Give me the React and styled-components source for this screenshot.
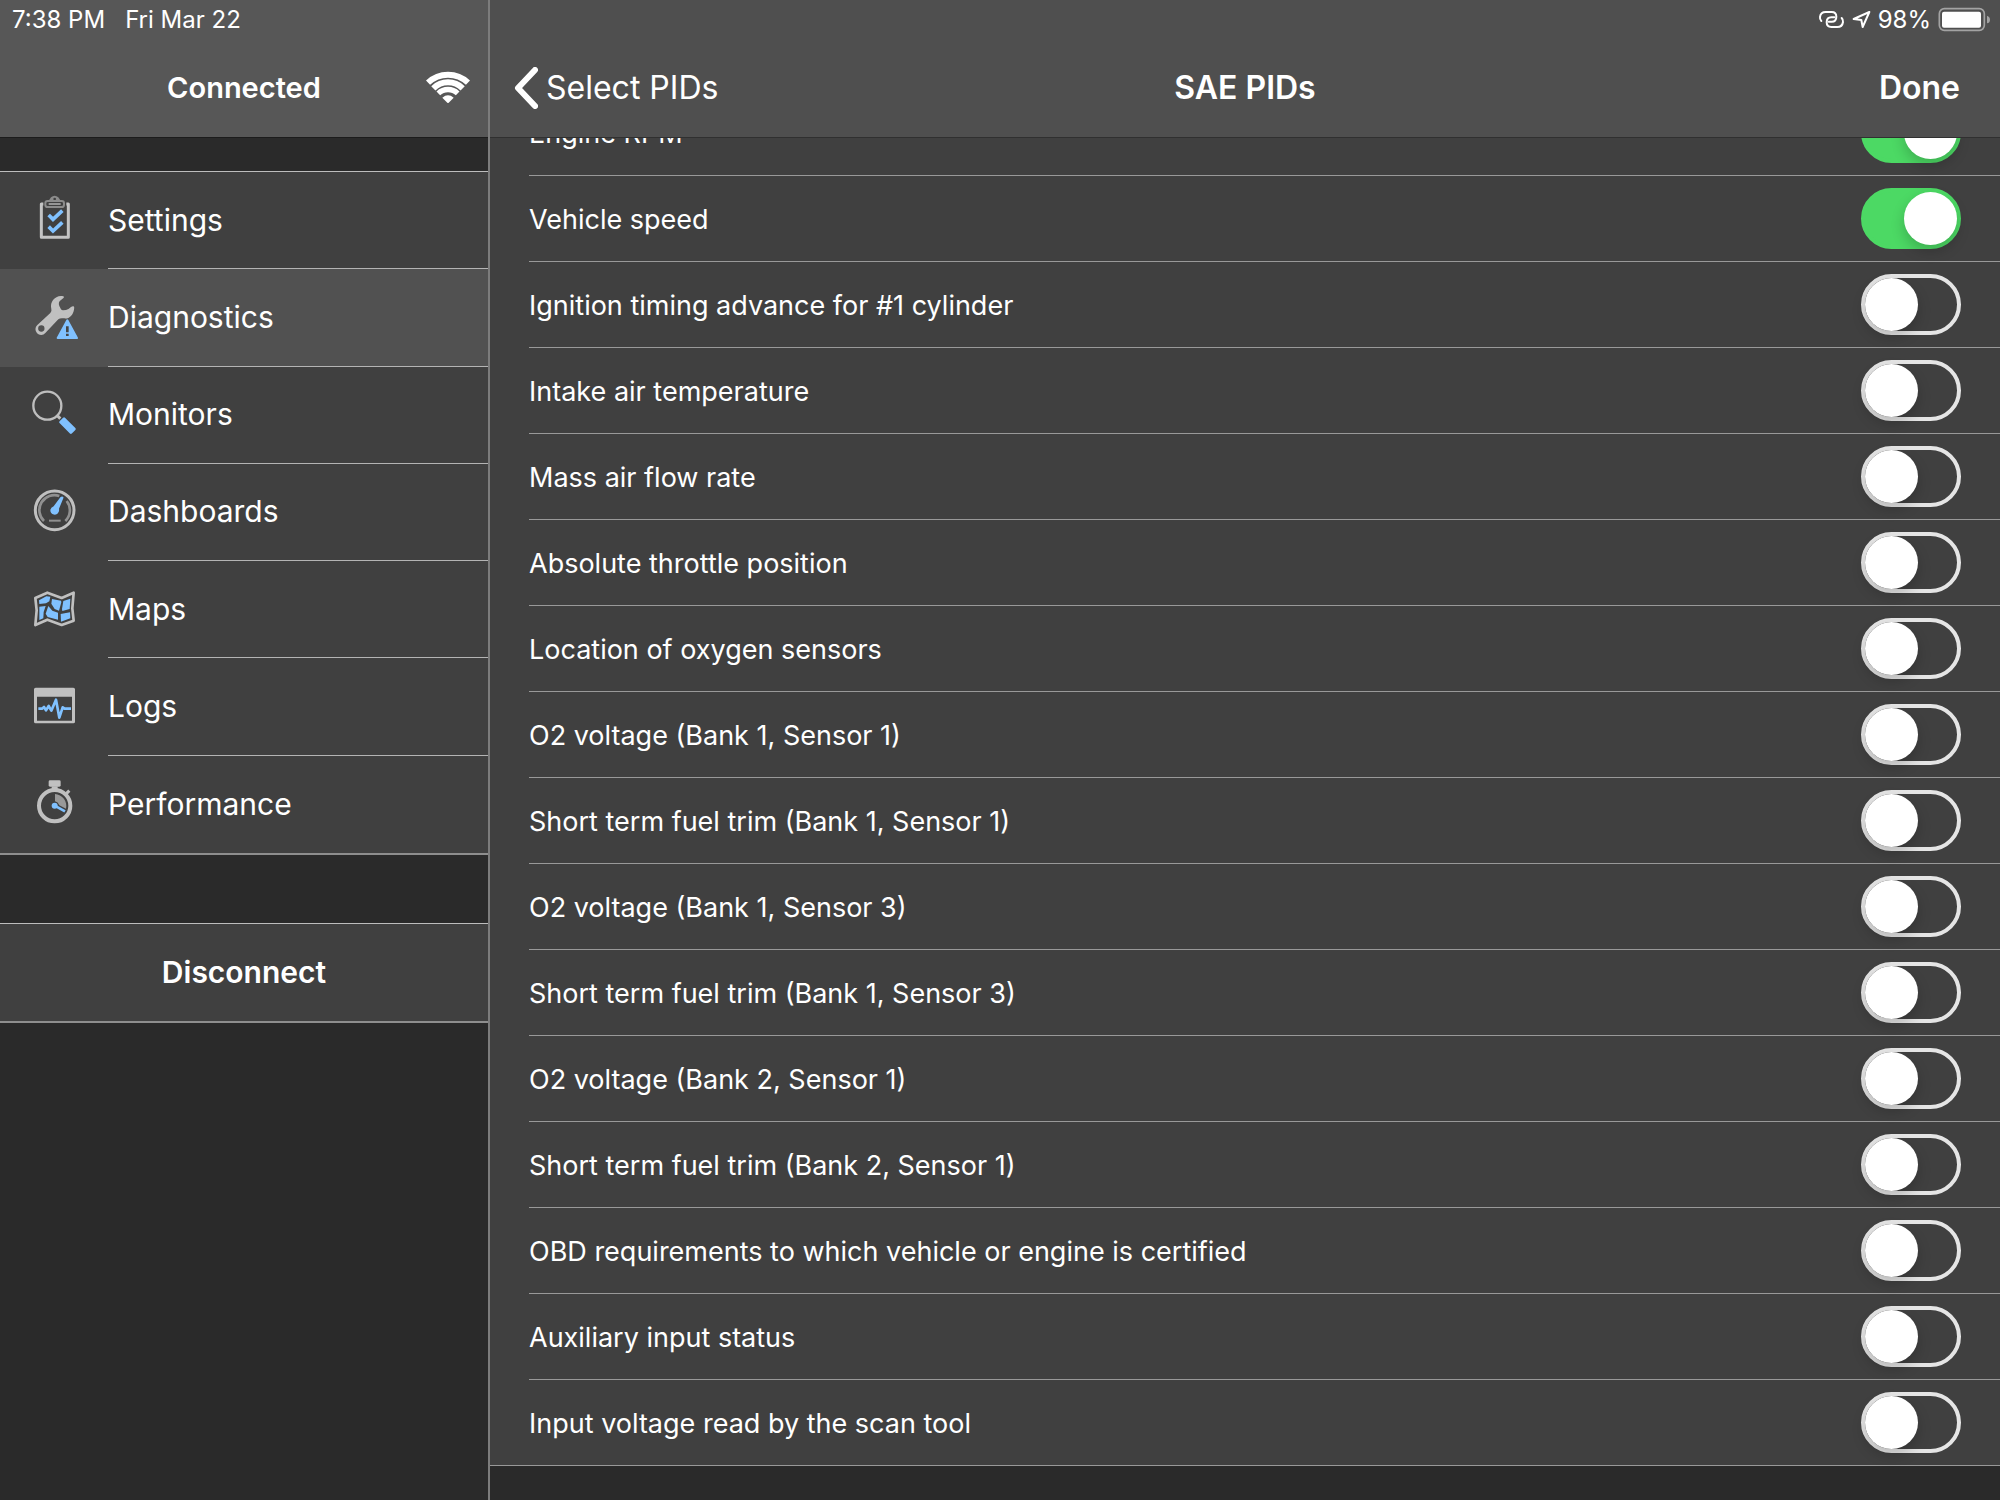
import React, { useState } from 'react';
import styled, { createGlobalStyle, css } from 'styled-components';

const menuItems = [
    { name: 'Settings', Icon: SettingsIcon },
    { name: 'Diagnostics', Icon: DiagnosticsIcon },
    { name: 'Monitors', Icon: MonitorsIcon },
    { name: 'Dashboards', Icon: DashboardsIcon },
    { name: 'Maps', Icon: MapsIcon },
    { name: 'Logs', Icon: LogsIcon },
    { name: 'Performance', Icon: PerformanceIcon },
];

const initialPids = [
    { name: 'Engine RPM', on: true },
    { name: 'Vehicle speed', on: true },
    { name: 'Ignition timing advance for #1 cylinder', on: false },
    { name: 'Intake air temperature', on: false },
    { name: 'Mass air flow rate', on: false },
    { name: 'Absolute throttle position', on: false },
    { name: 'Location of oxygen sensors', on: false },
    { name: 'O2 voltage (Bank 1, Sensor 1)', on: false },
    { name: 'Short term fuel trim (Bank 1, Sensor 1)', on: false },
    { name: 'O2 voltage (Bank 1, Sensor 3)', on: false },
    { name: 'Short term fuel trim (Bank 1, Sensor 3)', on: false },
    { name: 'O2 voltage (Bank 2, Sensor 1)', on: false },
    { name: 'Short term fuel trim (Bank 2, Sensor 1)', on: false },
    { name: 'OBD requirements to which vehicle or engine is certified', on: false },
    { name: 'Auxiliary input status', on: false },
    { name: 'Input voltage read by the scan tool', on: false },
];

function App() {
    const [selected, setSelected] = useState('Diagnostics');
    const [pids, setPids] = useState(initialPids);

    const togglePid = (index) => {
        setPids(pids.map((pid, i) => (i === index ? { ...pid, on: !pid.on } : pid)));
    };

    return (
        <Page>
            <GlobalStyle />
            <Sidebar>
                <SideHeader>
                    <StatusBar>
                        <span>7:38 PM</span>
                        <span>Fri Mar 22</span>
                    </StatusBar>
                    <NavBar>
                        <span />
                        <SideTitle>Connected</SideTitle>
                        <WifiIcon />
                    </NavBar>
                </SideHeader>
                <Menu>
                    {menuItems.map(({ name, Icon }) => (
                        <MenuItem key={name}>
                            <MenuButton
                                type="button"
                                $active={selected === name}
                                onClick={() => setSelected(name)}
                            >
                                <Icon />
                                <MenuLabel>{name}</MenuLabel>
                            </MenuButton>
                        </MenuItem>
                    ))}
                </Menu>
                <DisconnectButton type="button">Disconnect</DisconnectButton>
            </Sidebar>

            <Main>
                <MainHeader>
                    <StatusBar $right>
                        <HotspotIcon />
                        <LocationIcon />
                        <span>98%</span>
                        <BatteryIcon />
                    </StatusBar>
                    <NavBar>
                        <BackButton type="button">
                            <ChevronIcon />
                            Select PIDs
                        </BackButton>
                        <MainTitle>SAE PIDs</MainTitle>
                        <DoneButton type="button">Done</DoneButton>
                    </NavBar>
                </MainHeader>
                <ScrollArea>
                    <PidList>
                        {pids.map((pid, index) => (
                            <PidRow key={pid.name}>
                                <PidLabel htmlFor={'pid' + index}>{pid.name}</PidLabel>
                                <Switch
                                    id={'pid' + index}
                                    type="checkbox"
                                    role="switch"
                                    checked={pid.on}
                                    onChange={() => togglePid(index)}
                                />
                            </PidRow>
                        ))}
                    </PidList>
                </ScrollArea>
            </Main>
        </Page>
    );
}

/* menu icons */

function SettingsIcon() {
    return (
        <MenuSvg viewBox="96 51 144 144">
            <path d="M130 72H124V172H205V72H199" fill="none" stroke="#c4c4c4" strokeWidth="9" strokeLinejoin="round" />
            <path d="M146 62L153 52Q164 42 175 52L182 62Z" fill="#8c8c8c" />
            <circle cx="164" cy="57" r="4" fill="#404040" />
            <rect x="136" y="63" width="56" height="18" rx="7" fill="#404040" stroke="#8c8c8c" strokeWidth="6" />
            <path d="M146 72H182" stroke="#a8a8a8" strokeWidth="5" />
            <path d="M146 105L159 118L187 92M146 140L159 153L187 127" fill="none" stroke="#80c1ff" strokeWidth="11" />
        </MenuSvg>
    );
}

function DiagnosticsIcon() {
    return (
        <MenuSvg viewBox="96 342 144 144">
            <path
                d="M112 435L151 399Q156 394 154 387C149 366 163 349 183 348Q192 347 192 352Q191 355 184 359C176 364 175 370 178 378L183 388Q185 391 189 391L198 390Q206 388 212 382Q218 377 221 379Q224 382 222 389C219 406 207 418 191 415Q181 413 175 418L136 459A17 17 0 1 1 112 435ZM124 436A9 9 0 1 0 124 455A9 9 0 1 0 124 436Z"
                fill="#c0c0c0"
                fillRule="evenodd"
            />
            <path d="M202 421L231 474H173Z" fill="#80c1ff" stroke="#80c1ff" strokeWidth="6" strokeLinejoin="round" />
            <path d="M202 439V457M202 461V468" stroke="#454545" strokeWidth="8" />
        </MenuSvg>
    );
}

function MonitorsIcon() {
    return (
        <MenuSvg viewBox="96 93 144 144">
            <circle cx="142" cy="137" r="42" fill="none" stroke="#bebebe" strokeWidth="7" />
            <path d="M171 166L181 176" stroke="#bebebe" strokeWidth="9" />
            <rect x="176" y="185" width="52" height="23" rx="4" transform="rotate(45 202 197)" fill="#80c1ff" />
        </MenuSvg>
    );
}

function DashboardsIcon() {
    return (
        <MenuSvg viewBox="96 385 144 144">
            <circle cx="164" cy="452" r="58" fill="none" stroke="#c0c0c0" strokeWidth="9" />
            <path d="M132 484A45 45 0 0 1 178 409M200 424A45 45 0 0 1 196 484" fill="none" stroke="#909090" strokeWidth="8" />
            <path d="M147 483H182" stroke="#909090" strokeWidth="6" />
            <path d="M151 452Q152 443 161 440L181 413Q186 408 190 412Q191 414 189 418L177 447Q178 453 176 457A13 13 0 0 1 151 452Z" fill="#80c1ff" />
        </MenuSvg>
    );
}

function MapsIcon() {
    return (
        <MenuSvg viewBox="96 77 144 144">
            <path
                d="M106 113L142 97L185 113L221 97L217 144L221 181L185 194L142 178L106 194L110 150Z"
                fill="none"
                stroke="#c0c0c0"
                strokeWidth="8"
                strokeLinejoin="round"
            />
            <path
                d="M117 120L139 108L151 109L148 123L138 129L118 131ZM156 116L183 121L184 126L177 151L164 146L154 130ZM190 122L211 115L209 146L187 152L186 146ZM182 161L210 156L211 174L183 184ZM145 137L157 151L174 157L174 178L143 170L137 160ZM118 139L137 137L131 155L130 174L118 179Z"
                fill="#80c1ff"
            />
        </MenuSvg>
    );
}

function LogsIcon() {
    return (
        <MenuSvg viewBox="96 370 144 144">
            <path d="M107 384H220Q225 384 225 389V486Q225 491 220 491H107Q102 491 102 486V389Q102 384 107 384ZM111 411V483H216V411Z" fill="#c0c0c0" fillRule="evenodd" />
            <path d="M115 447H126L132 442L138 452L146 439L154 453L168 420L178 474L188 443L194 447H213" fill="none" stroke="#80c1ff" strokeWidth="8" strokeLinejoin="round" />
        </MenuSvg>
    );
}

function PerformanceIcon() {
    return (
        <MenuSvg viewBox="96 123 144 144">
            <circle cx="164" cy="200" r="47" fill="none" stroke="#c0c0c0" strokeWidth="12" />
            <rect x="146" y="124" width="36" height="19" rx="4" fill="#c0c0c0" />
            <path d="M155 142H173V152H155Z" fill="#c0c0c0" />
            <path d="M196 167L208 155" stroke="#c0c0c0" strokeWidth="9" />
            <path d="M165 165A36 36 0 0 1 198 209L178 199Q174 189 165 187Z" fill="#999999" />
            <path d="M164 200L195 217" stroke="#80c1ff" strokeWidth="8" />
            <circle cx="164" cy="200" r="9" fill="#80c1ff" />
        </MenuSvg>
    );
}

/* header icons */

function WifiIcon() {
    return (
        <WifiSvg viewBox="0 0 132 99" width="44" height="33" aria-label="Wi-Fi">
            <g fill="none" stroke="#ffffff">
                <path d="M6 35A87 87 0 0 1 126 35" strokeWidth="18" />
                <path d="M22 52A63 63 0 0 1 110 52" strokeWidth="18" />
                <path d="M37 67A42 42 0 0 1 95 67" strokeWidth="16" />
            </g>
            <path d="M49 80Q66 66 83 80L68 95Q66 97 64 95Z" fill="#ffffff" />
        </WifiSvg>
    );
}

function ChevronIcon() {
    return (
        <svg viewBox="0 0 24 42" width="24" height="42" aria-hidden="true">
            <path d="M21 3L4 21L21 39" fill="none" stroke="#ffffff" strokeWidth="6" strokeLinecap="round" strokeLinejoin="round" />
        </svg>
    );
}

function HotspotIcon() {
    return (
        <svg viewBox="108 27 81 63" width="27" height="21" aria-label="Personal hotspot">
            <g fill="none" stroke="#ffffff" strokeWidth="6" strokeLinecap="round">
                <path d="M118 63Q113 58 114 51Q116 36 131 36H149Q163 36 163 50Q163 65 149 65H140" />
                <path d="M179 54Q184 59 183 66Q181 81 166 81H148Q134 81 134 67Q134 52 148 52H157" />
            </g>
        </svg>
    );
}

function LocationIcon() {
    return (
        <svg viewBox="216 33 57 57" width="19" height="19" aria-label="Location">
            <path d="M268 39L221 60L244 63L248 84Z" fill="none" stroke="#ffffff" strokeWidth="6" strokeLinejoin="round" />
        </svg>
    );
}

function BatteryIcon() {
    return (
        <svg viewBox="474 21 159 75" width="53" height="25" aria-label="Battery">
            <rect x="478" y="26" width="135" height="65" rx="15" fill="none" stroke="#a3a3a3" strokeWidth="5" />
            <rect x="486" y="35" width="117" height="48" rx="6" fill="#ffffff" />
            <path d="M621 47Q630 50 630 59Q630 68 621 70Z" fill="#a3a3a3" />
        </svg>
    );
}

const GlobalStyle = createGlobalStyle`
    * {
        box-sizing: border-box;
    }

    body {
        margin: 0;
        background-color: #2a2a2a;
        color: #ffffff;
        font-family: Inter, 'Liberation Sans', sans-serif;
    }

    button {
        margin: 0;
        padding: 0;
        border: none;
        background: none;
        color: inherit;
        font: inherit;
        cursor: pointer;
    }
`;

const Page = styled.div`
    display: grid;
    grid-template-columns: minmax(400px, 24.5%) 1fr;
    height: 100vh;
    overflow: hidden;
`;

const Sidebar = styled.aside`
    display: flex;
    flex-direction: column;
    border-right: 2px solid #7c7c7c;
`;

const Main = styled.main`
    display: flex;
    flex-direction: column;
    min-height: 0;
`;

const Header = styled.header`
    flex: none;
    height: 138px;
    border-bottom: 1px solid #303030;
`;

const SideHeader = styled(Header)`
    background-color: #575757;
    border-bottom-color: #1c1c1c;
`;

const MainHeader = styled(Header)`
    background-color: #4f4f4f;
`;

const StatusBar = styled.div`
    display: flex;
    align-items: center;
    gap: 20px;
    height: 39px;
    padding: 0 12px;
    font-size: 24px;
    line-height: 38px;

    ${(props) =>
        props.$right &&
        css`
            justify-content: flex-end;
            gap: 7px;
            padding: 0 9px;
        `}
`;

const NavBar = styled.div`
    display: grid;
    grid-template-columns: 1fr auto 1fr;
    align-items: center;
    height: 97px;
`;

const SideTitle = styled.h2`
    margin: 0;
    font-size: 29px;
    font-weight: 600;
`;

const MainTitle = styled.h1`
    margin: 0;
    font-size: 32px;
    font-weight: 600;
`;

const WifiSvg = styled.svg`
    justify-self: end;
    margin-right: 18px;
`;

const BackButton = styled.button`
    display: flex;
    align-items: center;
    justify-self: start;
    gap: 8px;
    padding-left: 24px;
    font-size: 32px;
`;

const DoneButton = styled.button`
    justify-self: end;
    padding-right: 40px;
    font-size: 32px;
    font-weight: 600;
`;

const Menu = styled.ul`
    display: grid;
    grid-auto-rows: 1fr;
    flex: none;
    min-height: 684px;
    margin: 33px 0 68px;
    padding: 0;
    border-top: 1px solid #bdbdbd;
    border-bottom: 2px solid #8e8e8e;
    background-color: #404040;
    list-style: none;
`;

const MenuItem = styled.li`
    display: flex;
`;

const MenuButton = styled.button`
    display: flex;
    align-items: stretch;
    gap: 28px;
    width: 100%;
    padding-left: 32px;
    background-color: ${(props) => (props.$active ? '#515151' : 'transparent')};
    text-align: left;
`;

const MenuSvg = styled.svg`
    flex: none;
    align-self: center;
    width: 48px;
    height: 48px;
    overflow: visible;
`;

const MenuLabel = styled.span`
    display: flex;
    flex: 1;
    align-items: center;
    padding-bottom: 1px;
    border-bottom: 1px solid #b4b4b4;
    font-size: 30px;

    ${MenuItem}:last-child & {
        border-bottom: none;
    }
`;

const DisconnectButton = styled.button`
    flex: none;
    height: 100px;
    padding-bottom: 2px;
    border-top: 1px solid #bdbdbd;
    border-bottom: 2px solid #8e8e8e;
    background-color: #404040;
    font-size: 30px;
    font-weight: 600;
`;

const ScrollArea = styled.div`
    flex: 1;
    min-height: 0;
    overflow: hidden;
`;

/* the list is scrolled up, so its first row is half under the header */
const PidList = styled.ul`
    margin: -48px 0 0;
    padding: 0 0 0 39px;
    border-bottom: 1px solid #999999;
    background-color: #404040;
    list-style: none;
`;

const PidRow = styled.li`
    display: flex;
    align-items: center;
    justify-content: space-between;
    height: 86px;
    padding-right: 39px;
    border-bottom: 1px solid #999999;

    &:last-child {
        height: 85px;
        border-bottom: none;
    }
`;

const PidLabel = styled.label`
    padding-top: 2px;
    font-size: 27px;
    line-height: 40px;
`;

const Switch = styled.input`
    appearance: none;
    flex: none;
    width: 100px;
    height: 61px;
    margin: 0;
    padding: 0;
    border: 4px solid #e5e5e5;
    border-radius: 31px;
    cursor: pointer;

    &::before {
        content: '';
        display: block;
        width: 53px;
        height: 53px;
        border-radius: 50%;
        background-color: #ffffff;
        box-shadow: 0 6px 14px rgba(0, 0, 0, 0.2);
    }

    &:checked {
        border-color: #4cd964;
        background-color: #4cd964;
    }

    &:checked::before {
        margin-left: auto;
    }
`;

export default App;
